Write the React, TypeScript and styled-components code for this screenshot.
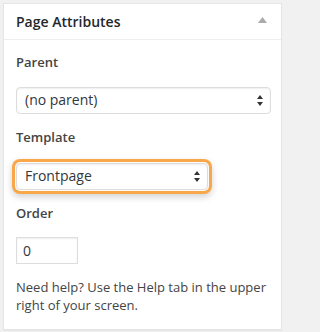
import React from "react";
import styled, { createGlobalStyle } from "styled-components";

const Global = createGlobalStyle`
  html, body { margin: 0; padding: 0; background: #f1f1f1; }
  body { font-family: "Open Sans", "Liberation Sans", sans-serif; color: #444; }
  * { box-sizing: border-box; }
`;

const Page = styled.div`
  padding: 3px 2px 4px 3px;
  width: 284px;
  height: 332px;
`;

const Panel = styled.div`
  background: #fff;
  border: 1px solid #e5e5e5;
  box-shadow: 0 1px 1px rgba(0, 0, 0, 0.04);
  display: flex;
  flex-direction: column;
`;

const Header = styled.div`
  height: 36px;
  border-bottom: 1px solid #eee;
  display: flex;
  align-items: center;
  justify-content: space-between;
  padding: 0 14px 0 12px;
`;

const Title = styled.h3`
  margin: 0;
  font-size: 14px;
  font-weight: 600;
  color: #23282d;
  line-height: 1.4;
  padding-top: 1px;
`;

const Toggle = styled.svg`
  display: block;
  margin-top: -3px;
`;

const Body = styled.div`
  padding: 13px 10px 15px 12px;
  display: flex;
  flex-direction: column;
`;

const Label = styled.p`
  margin: 0;
  font-size: 13px;
  font-weight: 600;
  line-height: 18px;
  color: #444;
`;

const Field = styled.div<{ $gapTop: number; $gapBottom: number }>`
  margin-top: ${(p) => p.$gapTop}px;
  margin-bottom: ${(p) => p.$gapBottom}px;
  display: flex;
`;

const SelectBox = styled.div<{ $width?: number; $highlight?: boolean }>`
  position: relative;
  width: ${(p) => (p.$width ? `${p.$width}px` : "100%")};
  height: 27px;
  border: 1px solid #ddd;
  border-radius: 4px;
  background: #fff;
  box-shadow: ${(p) =>
    p.$highlight
      ? "inset 0 1px 2px rgba(0,0,0,0.07), 0 0 0 1px #fbfbfb, 0 0 0 4px #f8a849, 0 3px 7px 4px rgba(0,0,0,0.18)"
      : "inset 0 1px 2px rgba(0,0,0,0.07)"};
  display: flex;
  align-items: center;
  justify-content: space-between;
  padding: 0 7px 0 8px;
  font-size: 14px;
  color: #32373c;
`;

const SelectText = styled.span<{ $indent?: number }>`
  line-height: 1;
  padding-left: ${(p) => p.$indent || 0}px;
  padding-bottom: 1px;
`;

const Input = styled.div`
  width: 62px;
  height: 27px;
  border: 1px solid #ddd;
  box-shadow: inset 0 1px 2px rgba(0, 0, 0, 0.07);
  font-size: 14px;
  color: #32373c;
  display: flex;
  align-items: center;
  padding: 0 0 1px 6px;
`;

const Help = styled.p`
  margin: 14px 0 0;
  font-size: 13px;
  line-height: 18px;
  color: #444;
`;

const Arrows = () => (
  <svg width="6" height="11" viewBox="0 0 6 11">
    <path d="M3 0 L6 4 L0 4 Z" fill="#333" />
    <path d="M0 7 L6 7 L3 11 Z" fill="#333" />
  </svg>
);

export default function App() {
  return (
    <>
      <Global />
      <Page>
        <Panel>
          <Header>
            <Title>Page Attributes</Title>
            <Toggle width="9" height="6" viewBox="0 0 9 6">
              <path d="M4.5 0 L9 6 L0 6 Z" fill="#aaa" />
            </Toggle>
          </Header>
          <Body>
            <Label>Parent</Label>
            <Field $gapTop={16} $gapBottom={14}>
              <SelectBox>
                <SelectText>(no parent)</SelectText>
                <Arrows />
              </SelectBox>
            </Field>
            <Label>Template</Label>
            <Field $gapTop={17} $gapBottom={14}>
              <SelectBox $width={192} $highlight>
                <SelectText>Frontpage</SelectText>
                <Arrows />
              </SelectBox>
            </Field>
            <Label>Order</Label>
            <Field $gapTop={15} $gapBottom={0}>
              <Input>0</Input>
            </Field>
            <Help>
              Need help? Use the Help tab in the upper right of your screen.
            </Help>
          </Body>
        </Panel>
      </Page>
    </>
  );
}
